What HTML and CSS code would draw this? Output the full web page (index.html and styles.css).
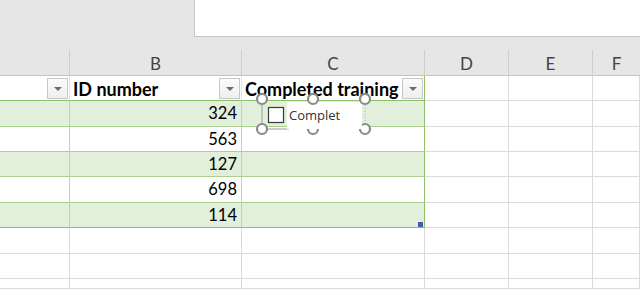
FILE: index.html
```html
<!DOCTYPE html>
<html>
<head>
<meta charset="utf-8">
<link rel="stylesheet" href="styles.css">
</head>
<body>
<div class="sheet">
  <div class="topbar"><div class="formula"></div></div>
  <div class="grid">
    <div class="ch"></div><div class="ch">B</div><div class="ch">C</div><div class="ch">D</div><div class="ch">E</div><div class="ch last">F</div>

    <div class="c th"><span class="flt"></span></div>
    <div class="c th"><span class="tt">ID number</span><span class="flt"></span></div>
    <div class="c th edge"><span class="tt">Completed training</span><span class="flt"></span></div>
    <div class="c"></div><div class="c"></div><div class="c"></div>

    <div class="c tb band"></div><div class="c tb band num">324</div><div class="c tb band edge"></div><div class="c"></div><div class="c"></div><div class="c"></div>
    <div class="c tb"></div><div class="c tb num">563</div><div class="c tb edge"></div><div class="c"></div><div class="c"></div><div class="c"></div>
    <div class="c tb band"></div><div class="c tb band num">127</div><div class="c tb band edge"></div><div class="c"></div><div class="c"></div><div class="c"></div>
    <div class="c tb"></div><div class="c tb num">698</div><div class="c tb edge"></div><div class="c"></div><div class="c"></div><div class="c"></div>
    <div class="c tb band lastrow"></div><div class="c tb band num lastrow">114</div><div class="c tb band edge lastrow"></div><div class="c"></div><div class="c"></div><div class="c"></div>

    <div class="c"></div><div class="c"></div><div class="c"></div><div class="c"></div><div class="c"></div><div class="c"></div>
    <div class="c"></div><div class="c"></div><div class="c"></div><div class="c"></div><div class="c"></div><div class="c"></div>
    <div class="c"></div><div class="c"></div><div class="c"></div><div class="c"></div><div class="c"></div><div class="c"></div>
  </div>

  <div class="control">
    <svg class="ctl-svg" width="120" height="46" viewBox="0 0 120 46">
      <line x1="7" y1="6" x2="7" y2="36" stroke="#9a9a9a" stroke-width="1"/>
      <line x1="7" y1="36" x2="34" y2="36" stroke="#9a9a9a" stroke-width="1"/>
      <line x1="110" y1="12" x2="110" y2="30" stroke="#b5b5b5" stroke-width="1" stroke-dasharray="1 2"/>
      <circle cx="58" cy="36" r="5" fill="#fff" stroke="#8a8a8a" stroke-width="2.2"/>
      <circle cx="110" cy="36" r="5" fill="#fff" stroke="#8a8a8a" stroke-width="2.2"/>
      <rect x="32" y="9" width="75" height="27" fill="#fff"/>
      <rect x="13.5" y="14.5" width="15" height="15" fill="#fff" stroke="#3a3a3a" stroke-width="1.2"/>
      <circle cx="7" cy="6" r="5" fill="#fff" stroke="#8a8a8a" stroke-width="2.2"/>
      <circle cx="58" cy="6" r="5" fill="#fff" stroke="#8a8a8a" stroke-width="2.2"/>
      <circle cx="110" cy="6" r="5" fill="#fff" stroke="#8a8a8a" stroke-width="2.2"/>
      <circle cx="7" cy="36" r="5" fill="#fff" stroke="#8a8a8a" stroke-width="2.2"/>
    </svg>
    <span class="ctl-label">Complet</span>
  </div>
  <div class="fillhandle"></div>
</div>
</body>
</html>
```

FILE: styles.css
```css
* { box-sizing: border-box; }
html, body { margin: 0; padding: 0; }
body { width: 640px; height: 289px; overflow: hidden; background: #fff; font-family: "Lato", "Open Sans", sans-serif; }
.sheet { position: relative; width: 640px; height: 289px; overflow: hidden; }

.topbar { height: 50px; background: #e6e6e6; padding-left: 194px; }
.formula { height: 37px; background: #fff; border-left: 1px solid #c6c6c6; border-bottom: 1px solid #c6c6c6; }

.grid {
  display: grid;
  grid-template-columns: 70px 172px 183px 84px 84px 1fr;
  grid-template-rows: 26px 25px 26px 25px 25px 26px 25px 26px 25px 10px;
}
.ch {
  background: #e6e6e6;
  border-right: 1px solid #cfcfcf;
  border-bottom: 1px solid #c4c4c4;
  display: flex; align-items: center; justify-content: center;
  color: #444; font-size: 17px; padding-top: 1px;
}
.ch.last { border-right: none; }
.c {
  border-right: 1px solid #dadada;
  border-bottom: 1px solid #dadada;
  font-size: 16.5px; color: #000;
}
.th {
  background: #fff;
  border-bottom: 1px solid #8cc168;
  border-right: 1px solid #e1e1e1;
  display: flex; align-items: center; justify-content: space-between;
  padding: 0 1px 0 3px; font-weight: bold; font-size: 18px;
}
.th .tt { padding-top: 1px; }
.th:first-child { justify-content: flex-end; }
.flt {
  width: 21px; height: 21px; margin-left: auto; flex: none;
  border: 1px solid #c7c7c7;
  background: linear-gradient(#fbfbfb, #efefef);
  position: relative;
}
.flt::after {
  content: ""; position: absolute; left: 6px; top: 8px;
  border-left: 4px solid transparent; border-right: 4px solid transparent;
  border-top: 4px solid #6b6b6b;
}
.tb { border-bottom: 1px solid #a9d08e; border-right: 1px solid #b9d9a4; }
.band { background: #e2efda; }
.edge { border-right: 1px solid #8cc168; }
.lastrow { border-bottom: 1px solid #8cc168; }
.num { text-align: right; padding-right: 4px; line-height: 25px; }

.control { position: absolute; left: 255px; top: 93px; width: 120px; height: 46px; }
.ctl-svg { position: absolute; left: 0; top: 0; }
.ctl-label {
  position: absolute; left: 34px; top: 13px;
  font-family: "Open Sans", sans-serif; font-size: 13px; color: #333;
}
.fillhandle {
  position: absolute; left: 418px; top: 222px; width: 5px; height: 5px;
  background: #4557b7;
}
```
